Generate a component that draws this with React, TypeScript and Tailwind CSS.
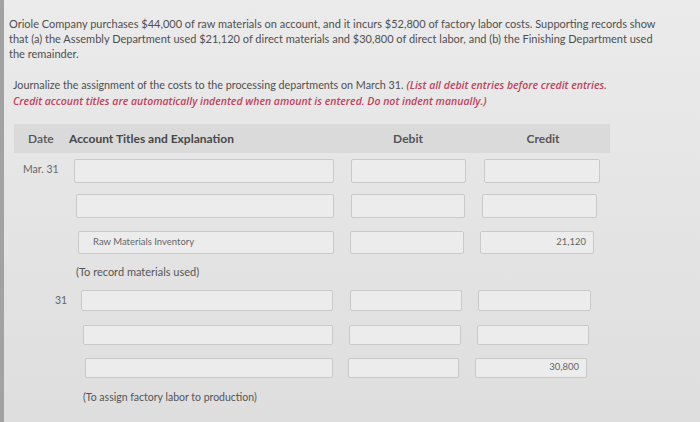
import React from 'react';

type Row = {
  date?: string;
  dateCls: string;
  rowCls: string;
  accCls: string;
  debCls: string;
  credCls: string;
  account?: string;
  credit?: string;
};

const rows: Row[] = [
  { date: 'Mar. 31', dateCls: 'w-[60px] pl-[9px]', rowCls: 'mt-[6px] h-[24px]', accCls: 'w-[260px]', debCls: 'ml-[17px] w-[115px]', credCls: 'ml-[18px] w-[116px]' },
  { dateCls: 'w-[62px]', rowCls: 'mt-[11px] h-[24px]', accCls: 'w-[258px]', debCls: 'ml-[17px] w-[114px]', credCls: 'ml-[17px] w-[115px]' },
  { dateCls: 'w-[64px]', rowCls: 'mt-[13px] h-[23px]', accCls: 'w-[256px]', debCls: 'ml-[16px] w-[114px]', credCls: 'ml-[16px] w-[114px]', account: 'Raw Materials Inventory', credit: '21,120' },
];

const rows2: Row[] = [
  { date: '31', dateCls: 'w-[67px] pl-[41px]', rowCls: 'mt-[9px] h-[21px]', accCls: 'w-[252px]', debCls: 'ml-[17px] w-[112px]', credCls: 'ml-[16px] w-[113px]' },
  { dateCls: 'w-[69px]', rowCls: 'mt-[14px] h-[20px]', accCls: 'w-[250px]', debCls: 'ml-[16px] w-[112px]', credCls: 'ml-[16px] w-[112px]' },
  { dateCls: 'w-[71px]', rowCls: 'mt-[13px] h-[20px]', accCls: 'w-[248px]', debCls: 'ml-[15px] w-[111px]', credCls: 'ml-[16px] w-[112px]', credit: '30,800' },
];

function Box({ cls, children, right }: { cls: string; children?: React.ReactNode; right?: boolean }) {
  return (
    <div
      className={`${cls} h-full border border-[#c9c9c9] bg-[#ececec] rounded-[2px] flex items-center text-[9.5px] text-[#666] ${right ? 'justify-end pr-[7px]' : 'pl-[14px]'}`}
    >
      {children}
    </div>
  );
}

function JournalRow({ row }: { row: Row }) {
  return (
    <div className={`flex ${row.rowCls}`}>
      <div className={`${row.dateCls} shrink-0 pt-[3px] text-[10.5px] text-[#666]`}>{row.date}</div>
      <Box cls={row.accCls}>{row.account}</Box>
      <Box cls={row.debCls} />
      <Box cls={row.credCls} right>{row.credit}</Box>
    </div>
  );
}

export default function App() {
  return (
    <div className="w-[700px] h-[422px] flex overflow-hidden bg-gradient-to-b from-[#ebebeb] to-[#dedede] font-['Lato','Open_Sans',sans-serif]">
      <div className="w-[4px] shrink-0 bg-[#a2a2a2]" />
      <div className="flex-1 pl-[5px] pt-[16px]">
        <p className="text-[11px] leading-[15px] text-[#4f4f4f] whitespace-nowrap">
          Oriole Company purchases $44,000 of raw materials on account, and it incurs $52,800 of factory labor costs. Supporting records show
          <br />
          that (a) the Assembly Department used $21,120 of direct materials and $30,800 of direct labor, and (b) the Finishing Department used
          <br />
          the remainder.
        </p>

        <p className="mt-[16px] ml-[4px] text-[10.75px] leading-[15px] text-[#4f4f4f] whitespace-nowrap">
          Journalize the assignment of the costs to the processing departments on March 31.{' '}
          <span className="italic font-semibold text-[#c2415b] font-['Open_Sans',sans-serif] text-[10.5px]">
            (List all debit entries before credit entries.
          </span>
          <br />
          <span className="italic font-semibold text-[#c2415b] font-['Open_Sans',sans-serif] text-[10.5px]">
            Credit account titles are automatically indented when amount is entered. Do not indent manually.)
          </span>
        </p>

        <div className="ml-[5px] mt-[15px] w-[596px]">
          <div className="h-[29px] bg-[#dadada] flex items-center pl-[14px] text-[12px] font-bold text-[#555]">
            <span className="w-[41px] font-semibold">Date</span>
            <span className="w-[279px] text-[#474747]">Account Titles and Explanation</span>
            <span className="w-[120px] text-center">Debit</span>
            <span className="ml-[15px] w-[120px] text-center">Credit</span>
          </div>

          {rows.map((r, i) => (
            <JournalRow key={i} row={r} />
          ))}
          <div className="mt-[10px] ml-[62px] text-[11px] text-[#555]">(To record materials used)</div>

          {rows2.map((r, i) => (
            <JournalRow key={i} row={r} />
          ))}
          <div className="mt-[12px] ml-[69px] text-[10.5px] text-[#555]">(To assign factory labor to production)</div>
        </div>
      </div>
    </div>
  );
}
